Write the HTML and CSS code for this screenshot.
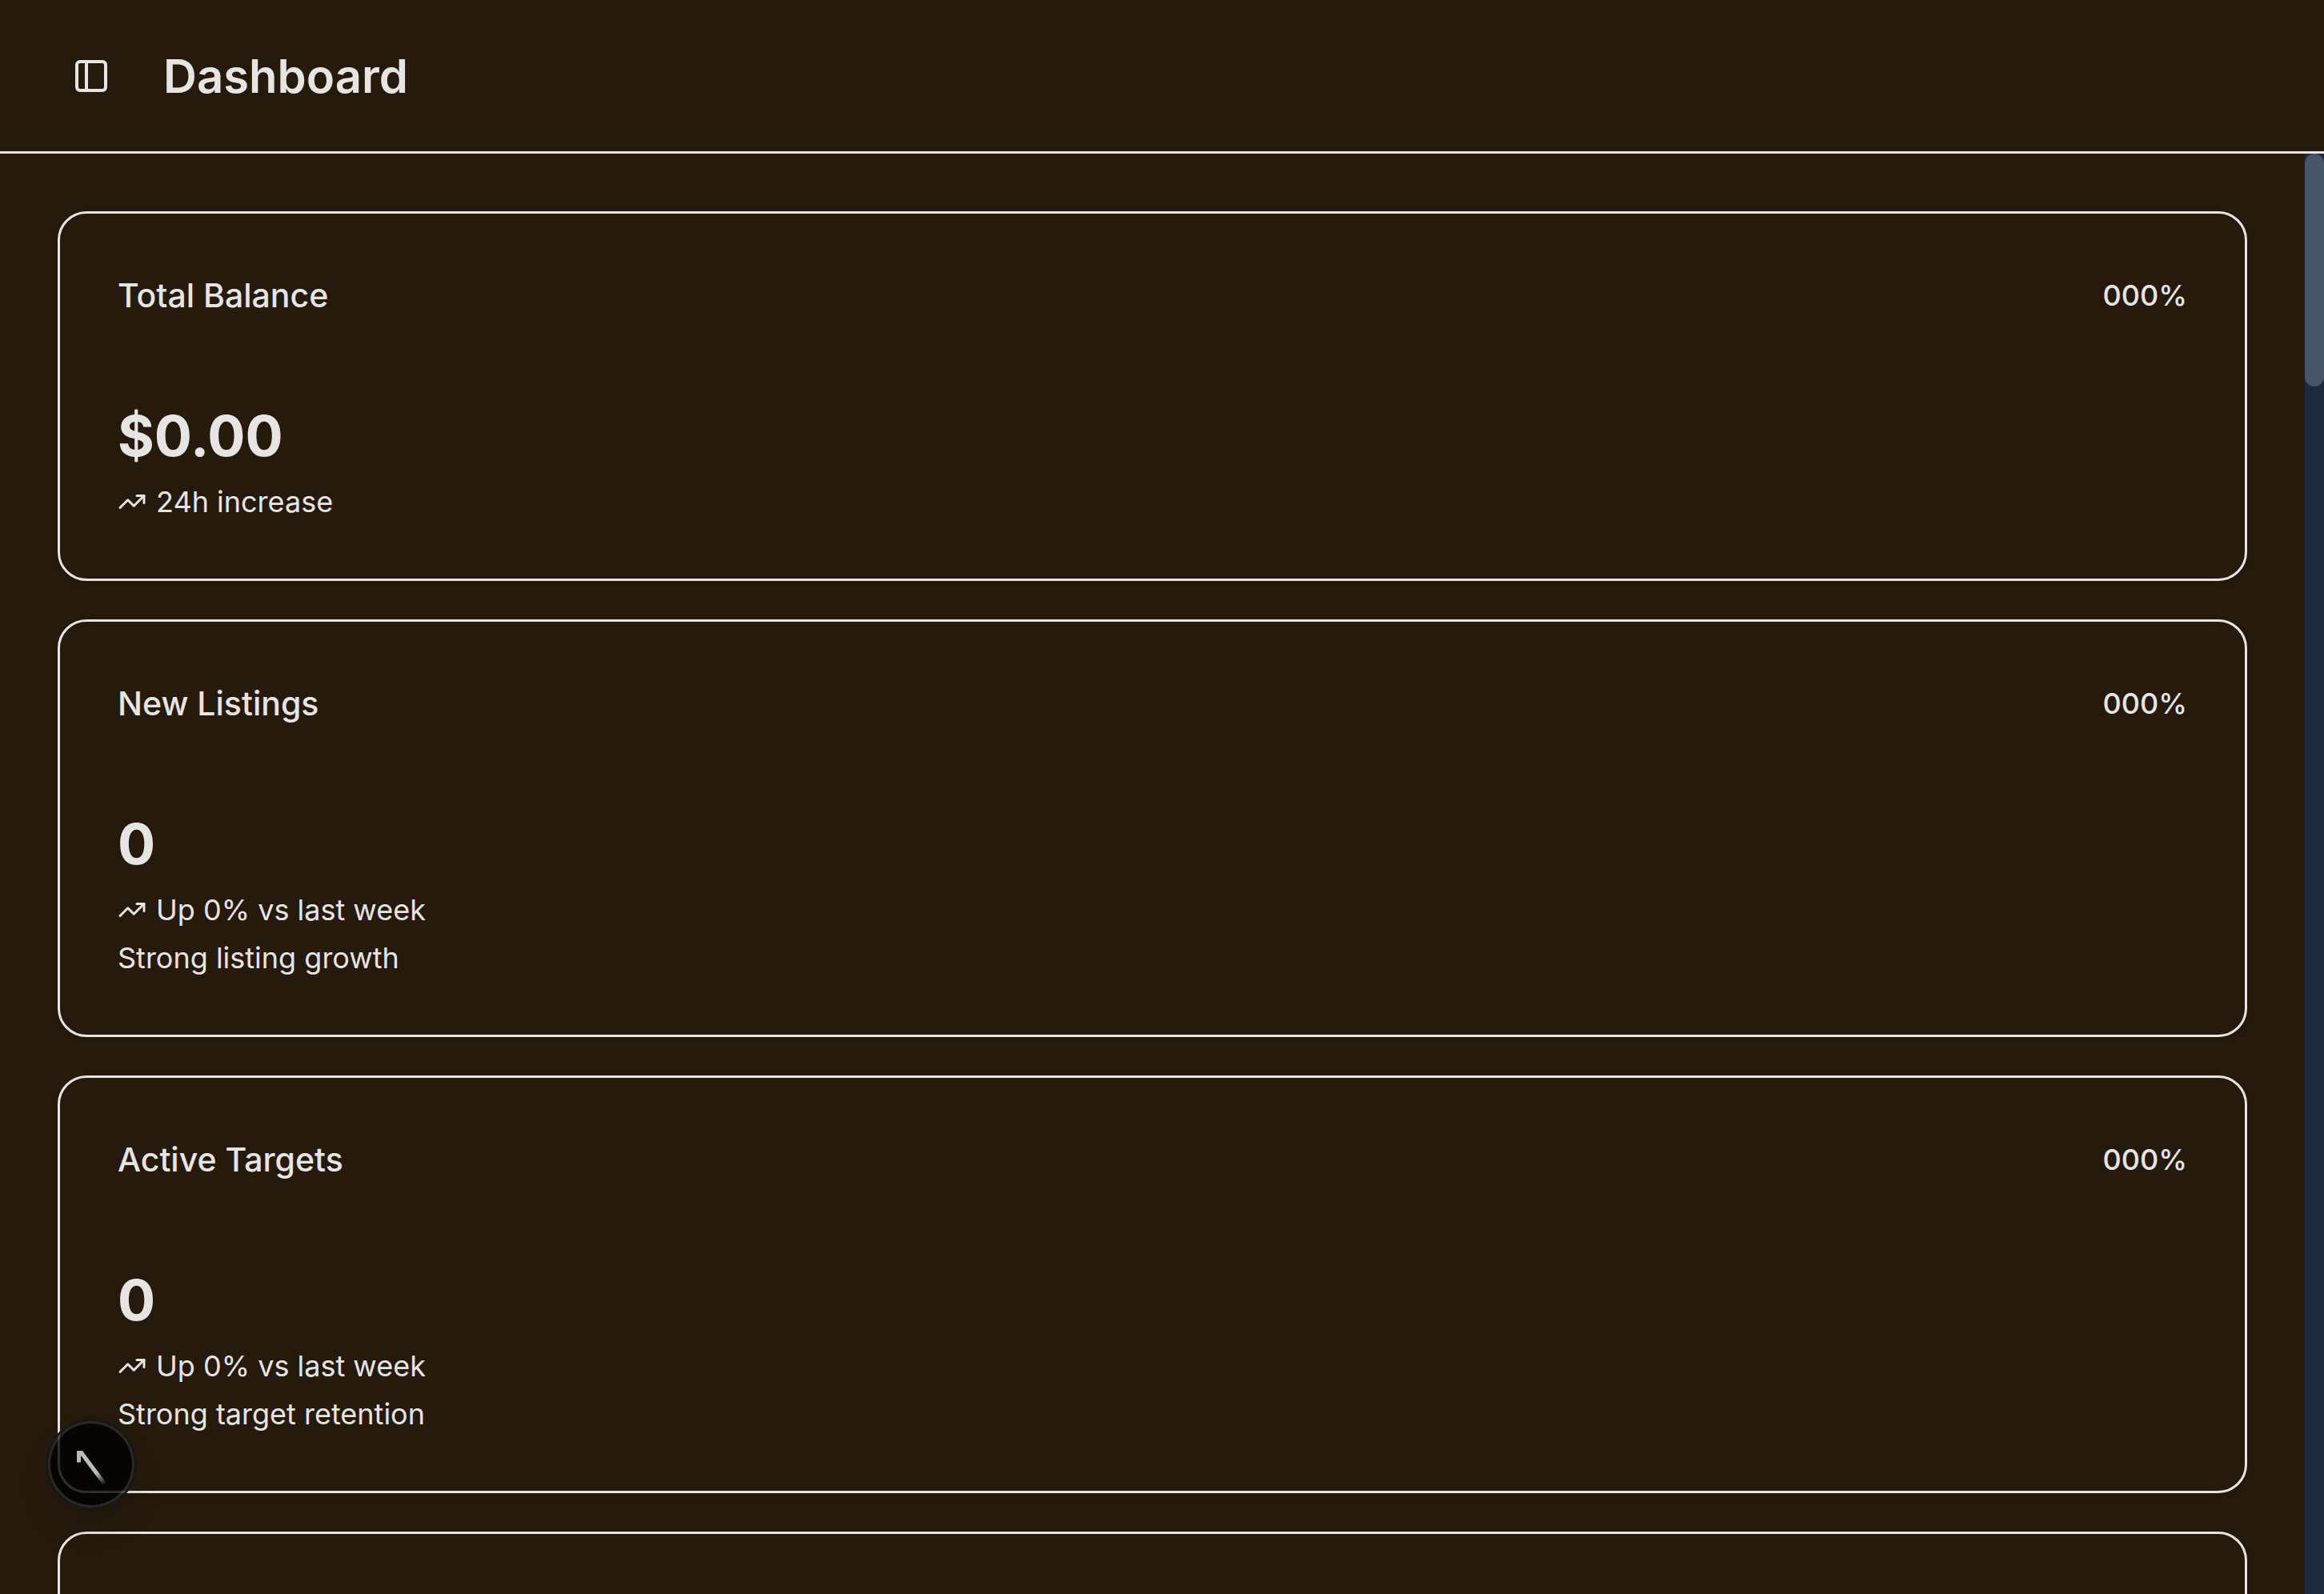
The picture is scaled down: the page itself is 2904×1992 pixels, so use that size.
FILE: index.html
```html
<!DOCTYPE html>
<html lang="en">
<head>
<meta charset="utf-8">
<meta name="viewport" content="width=device-width, initial-scale=1">
<title>Dashboard</title>
<link rel="stylesheet" href="styles.css">
</head>
<body>
<svg class="sprite" aria-hidden="true">
  <symbol id="trending-up" viewBox="0 0 24 24">
    <path d="m22 7-8.500 8.500-5-5L2 17"/>
    <path d="M16 7h6v6"/>
  </symbol>
</svg>

<header class="topbar">
  <button class="icon-button" type="button" aria-label="Toggle sidebar">
    <svg class="panel-icon" viewBox="0 0 24 24" aria-hidden="true">
      <rect x="3" y="3" width="18" height="18" rx="2"/>
      <path d="M9 3v18"/>
    </svg>
  </button>
  <h1 class="page-title">Dashboard</h1>
</header>

<div class="viewport">
  <main class="cards">
    <section class="card">
      <div class="card-head">
        <h2 class="card-title">Total Balance</h2>
        <span class="badge">000%</span>
      </div>
      <div class="card-body">
        <p class="value">$0.00</p>
        <p class="note"><svg class="trend-icon" aria-hidden="true"><use href="#trending-up"/></svg>24h increase</p>
      </div>
    </section>

    <section class="card">
      <div class="card-head">
        <h2 class="card-title">New Listings</h2>
        <span class="badge">000%</span>
      </div>
      <div class="card-body">
        <p class="value">0</p>
        <p class="note"><svg class="trend-icon" aria-hidden="true"><use href="#trending-up"/></svg>Up 0% vs last week</p>
        <p class="note">Strong listing growth</p>
      </div>
    </section>

    <section class="card">
      <div class="card-head">
        <h2 class="card-title">Active Targets</h2>
        <span class="badge">000%</span>
      </div>
      <div class="card-body">
        <p class="value">0</p>
        <p class="note"><svg class="trend-icon" aria-hidden="true"><use href="#trending-up"/></svg>Up 0% vs last week</p>
        <p class="note">Strong target retention</p>
      </div>
    </section>

    <section class="card card-empty"></section>
  </main>
  <div class="scroll-track"><div class="scroll-thumb"></div></div>
</div>

<button class="dev-button" type="button" aria-label="Open developer tools">
  <svg class="dev-logo" viewBox="0 0 108 108" aria-hidden="true">
    <defs>
      <linearGradient id="fade" gradientUnits="userSpaceOnUse" x1="61" y1="65" x2="71" y2="79">
        <stop offset="0" stop-color="#bdbcbc"/>
        <stop offset="1" stop-color="#bdbcbc" stop-opacity="0"/>
      </linearGradient>
    </defs>
    <path fill="url(#fade)" d="M36 37h7L74 78.500 69.500 81 41 43v8.500h-5z"/>
  </svg>
</button>
</body>
</html>
```
FILE: styles.css
```css
:root {
  --bg: #261a0d;
  --fg: #e7e5e4;
}

* {
  box-sizing: border-box;
  margin: 0;
}

body {
  display: flex;
  flex-direction: column;
  height: 100vh;
  overflow: hidden;
  background: var(--bg);
  color: var(--fg);
  font-family: Inter, "Liberation Sans", sans-serif;
  font-size: 36px;
  line-height: 48px;
}

button {
  padding: 0;
  border: 0;
  background: none;
  color: inherit;
  font: inherit;
}

svg {
  display: block;
  fill: none;
  stroke: currentColor;
  stroke-width: 2;
  stroke-linecap: round;
  stroke-linejoin: round;
}

.sprite {
  position: absolute;
  width: 0;
  height: 0;
}

.topbar {
  display: flex;
  flex: none;
  align-items: center;
  gap: 48px;
  height: 192px;
  padding: 0 72px;
  border-bottom: 3px solid var(--fg);
}

.icon-button {
  display: grid;
  place-items: center;
  width: 84px;
  height: 84px;
}

.panel-icon {
  width: 48px;
  height: 48px;
}

.page-title {
  font-size: 58px;
  font-weight: 600;
  line-height: 84px;
}

.viewport {
  display: flex;
  flex: 1;
  min-height: 0;
}

.cards {
  display: flex;
  flex: 1;
  flex-direction: column;
  gap: 48px;
  min-width: 0;
  padding: 72px;
  overflow: hidden;
}

.card {
  display: flex;
  flex: none;
  flex-direction: column;
  gap: 100px;
  padding: 72px;
  border: 3px solid var(--fg);
  border-radius: 36px;
  box-shadow: 0 3px 6px rgba(0, 0, 0, 0.15);
}

.card-empty {
  min-height: 522px;
}

.card-head {
  display: flex;
  align-items: center;
  justify-content: space-between;
}

.card-title {
  font-size: 41px;
  font-weight: 500;
  line-height: 60px;
}

.badge {
  font-weight: 500;
}

.card-body {
  display: flex;
  flex-direction: column;
  gap: 12px;
}

.value {
  font-size: 70px;
  font-weight: 700;
  line-height: 92px;
}

.note {
  display: flex;
  align-items: center;
  gap: 12px;
}

.trend-icon {
  width: 36px;
  height: 36px;
}

.scroll-track {
  flex: none;
  width: 24px;
  background: #1e293b;
}

.scroll-thumb {
  height: 291px;
  border-radius: 12px;
  background: #475569;
}

.dev-button {
  position: fixed;
  bottom: 108px;
  left: 60px;
  width: 108px;
  height: 108px;
  border-radius: 50%;
  background: rgba(0, 0, 0, 0.8);
  box-shadow:
    0 0 0 3px #171717,
    inset 0 0 0 3px rgba(255, 255, 255, 0.14),
    0 24px 48px -12px rgba(0, 0, 0, 0.24);
}

.dev-logo {
  width: 108px;
  height: 108px;
  stroke: none;
}
```
